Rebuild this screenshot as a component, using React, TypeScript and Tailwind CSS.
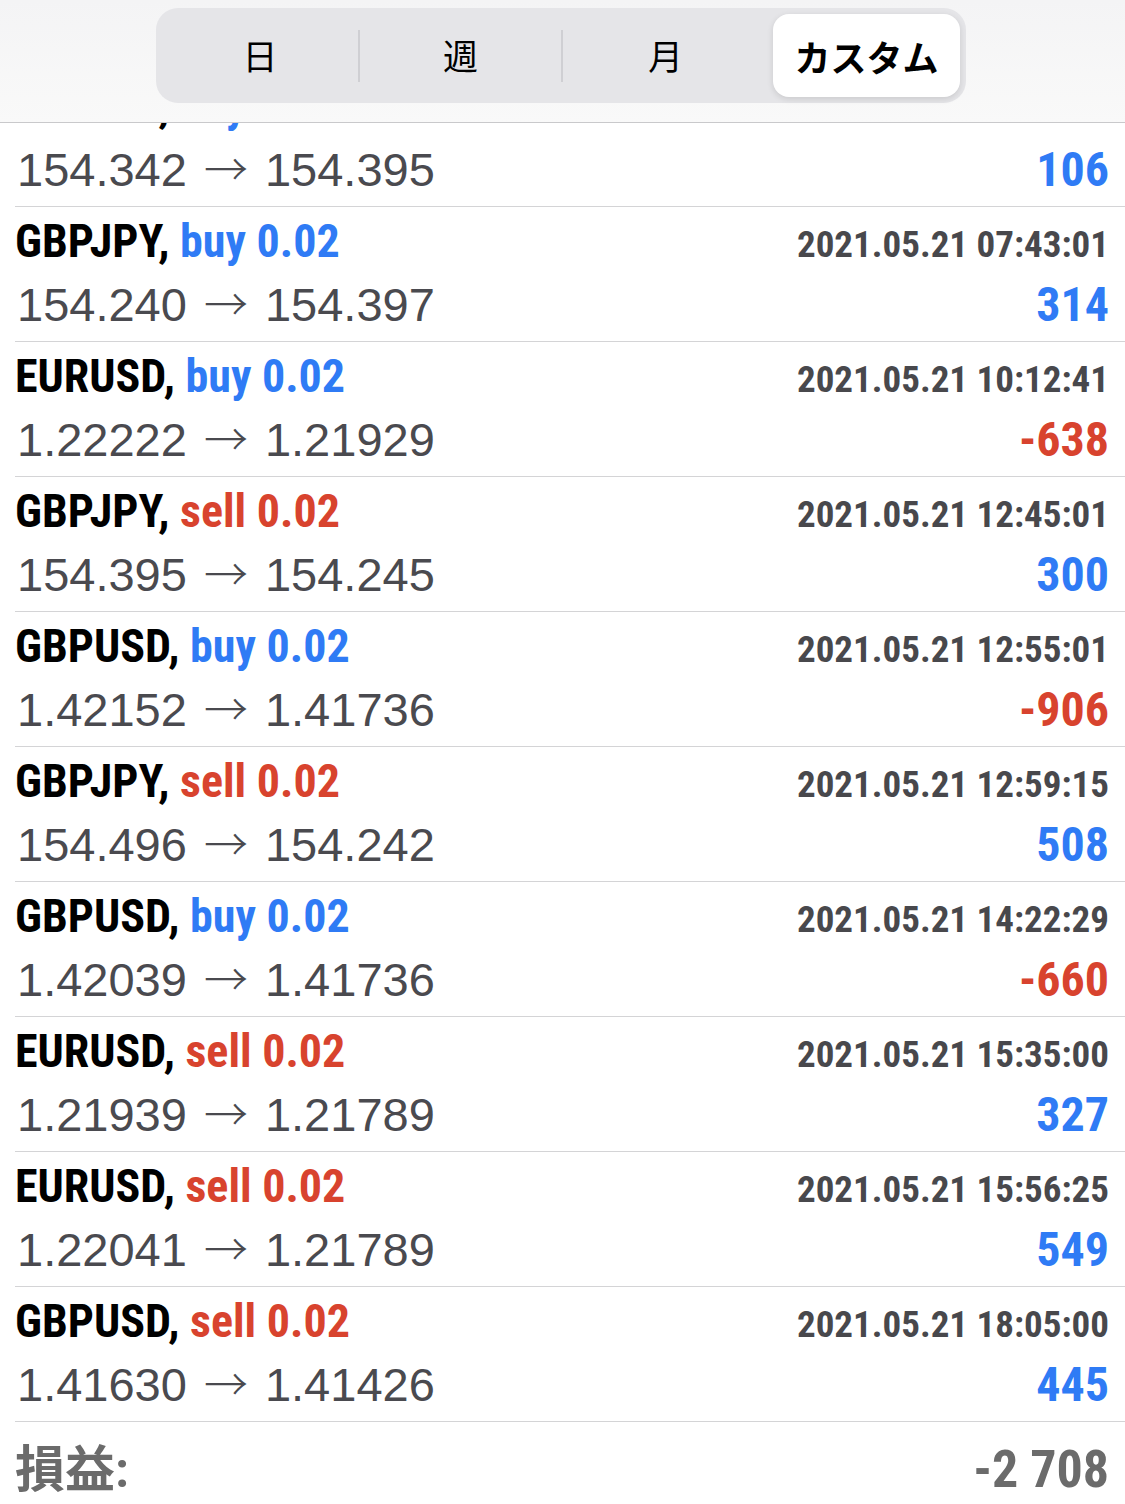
import React from "react";

type Deal = {
  symbol: string;
  side: "buy" | "sell";
  volume: string;
  time: string;
  open: string;
  close: string;
  profit: string;
};

const deals: Deal[] = [
  { symbol: "GBPJPY", side: "buy", volume: "0.02", time: "2021.05.21 06:58:12", open: "154.342", close: "154.395", profit: "106" },
  { symbol: "GBPJPY", side: "buy", volume: "0.02", time: "2021.05.21 07:43:01", open: "154.240", close: "154.397", profit: "314" },
  { symbol: "EURUSD", side: "buy", volume: "0.02", time: "2021.05.21 10:12:41", open: "1.22222", close: "1.21929", profit: "-638" },
  { symbol: "GBPJPY", side: "sell", volume: "0.02", time: "2021.05.21 12:45:01", open: "154.395", close: "154.245", profit: "300" },
  { symbol: "GBPUSD", side: "buy", volume: "0.02", time: "2021.05.21 12:55:01", open: "1.42152", close: "1.41736", profit: "-906" },
  { symbol: "GBPJPY", side: "sell", volume: "0.02", time: "2021.05.21 12:59:15", open: "154.496", close: "154.242", profit: "508" },
  { symbol: "GBPUSD", side: "buy", volume: "0.02", time: "2021.05.21 14:22:29", open: "1.42039", close: "1.41736", profit: "-660" },
  { symbol: "EURUSD", side: "sell", volume: "0.02", time: "2021.05.21 15:35:00", open: "1.21939", close: "1.21789", profit: "327" },
  { symbol: "EURUSD", side: "sell", volume: "0.02", time: "2021.05.21 15:56:25", open: "1.22041", close: "1.21789", profit: "549" },
  { symbol: "GBPUSD", side: "sell", volume: "0.02", time: "2021.05.21 18:05:00", open: "1.41630", close: "1.41426", profit: "445" },
];

const cond = "font-['Roboto_Condensed','Noto_Sans_CJK_JP',sans-serif]";
const regular = "font-['Liberation_Sans','Noto_Sans_CJK_JP',sans-serif]";
const cjk = "font-['Noto_Sans_CJK_JP',sans-serif]";

const DealRow = ({ deal }: { deal: Deal }) => {
  const sideColor = deal.side === "buy" ? "text-[#2f7bf5]" : "text-[#d8432e]";
  const profitColor = deal.profit.startsWith("-") ? "text-[#d8432e]" : "text-[#2f7bf5]";

  return (
    <div className="ml-[15px] h-[135px] border-b border-[#d4d4d6] pt-2 pr-[16px] flex flex-col gap-[9px]">
      <div className="h-[52px] flex justify-between items-baseline">
        <div className={cond + " text-[46px] leading-[52px] font-bold text-black whitespace-nowrap"}>
          {deal.symbol}, <span className={sideColor}>{deal.side} {deal.volume}</span>
        </div>
        <div className={cond + " text-[37px] leading-[52px] font-bold text-[#48484c] whitespace-nowrap"}>
          {deal.time}
        </div>
      </div>
      <div className="h-[52px] flex justify-between items-baseline">
        <div className={regular + " pl-[2px] text-[47px] leading-[52px] text-[#4a4a4f] whitespace-nowrap"}>
          {deal.open}
          <span className={cjk + " mx-[17px] font-light text-[44px]"}>→</span>
          {deal.close}
        </div>
        <div className={cond + " text-[48px] leading-[52px] font-bold whitespace-nowrap " + profitColor}>
          {deal.profit}
        </div>
      </div>
    </div>
  );
};

const Divider = () => <div className="w-[2px] self-center h-[52px] bg-[#cfcfd3]" />;

export default function App() {
  return (
    <div className="relative w-[1125px] h-[1504px] overflow-hidden bg-white pt-[72px]">
      <div className="absolute top-0 left-0 right-0 h-[123px] bg-gradient-to-b from-[#f4f4f5] to-[#f9f9f9] border-b border-[#c9c9cb] flex justify-center pt-[8px] z-10">
        <div className="ml-[-3px] w-[810px] h-[95px] rounded-[22px] bg-[#e5e5e8] p-[6px] flex">
          <div className={cjk + " w-[196px] flex items-center justify-center text-[35px] text-black"}>日</div>
          <Divider />
          <div className={cjk + " w-[201px] flex items-center justify-center text-[35px] text-black"}>週</div>
          <Divider />
          <div className={cjk + " w-[205px] flex items-center justify-center text-[35px] text-black"}>月</div>
          <div className="w-[5px]" />
          <div className={cjk + " w-[187px] flex items-center justify-center text-[36px] font-bold text-black bg-white rounded-[16px] shadow-[0_2px_6px_rgba(0,0,0,0.12)]"}>
            カスタム
          </div>
        </div>
      </div>

      {deals.map((d, i) => (
        <DealRow key={i} deal={d} />
      ))}

      <div className="ml-[15px] h-[82px] pt-[14px] pr-[16px] flex justify-between items-center">
        <div className={cond + " text-[50px] font-bold text-[#6b6b6b]"}>損益:</div>
        <div className={cond + " text-[52px] font-bold text-[#6b6b6b]"}>-2 708</div>
      </div>
    </div>
  );
}
